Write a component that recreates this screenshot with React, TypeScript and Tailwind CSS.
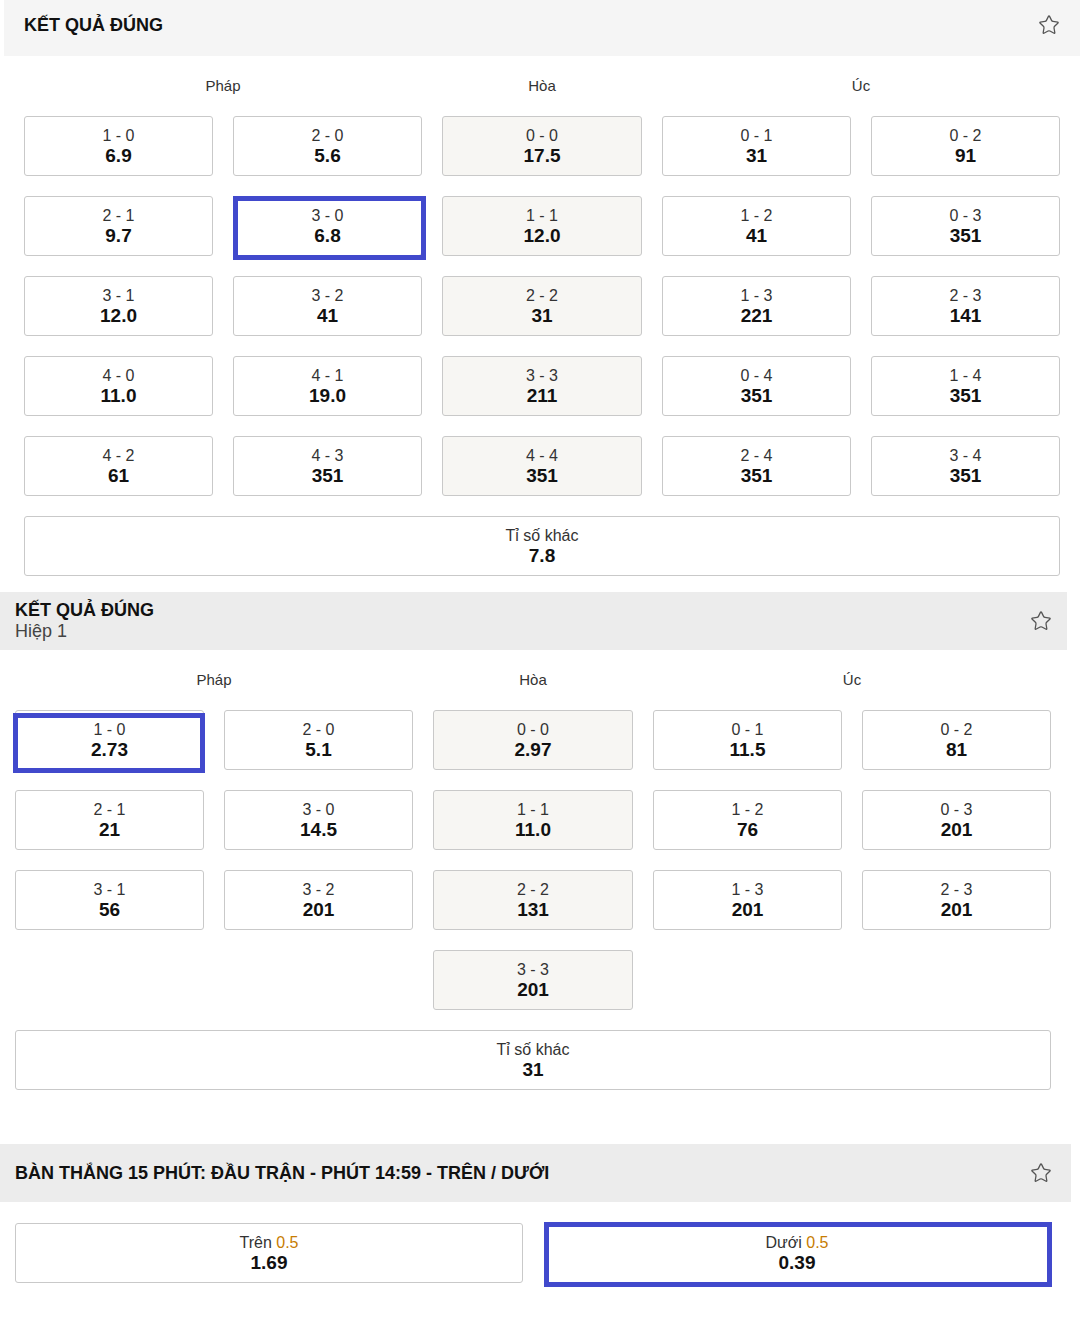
import React from "react";
import { Star } from "lucide-react";

type Cell = { s: string; o: string; mid?: boolean; sel?: "a" | "b"; start?: boolean };

const ft = { fontFamily: '"Liberation Sans", Arial, sans-serif' };

const full: Cell[][] = [
  [{ s: "1 - 0", o: "6.9" }, { s: "2 - 0", o: "5.6" }, { s: "0 - 0", o: "17.5", mid: true }, { s: "0 - 1", o: "31" }, { s: "0 - 2", o: "91" }],
  [{ s: "2 - 1", o: "9.7" }, { s: "3 - 0", o: "6.8", sel: "a" }, { s: "1 - 1", o: "12.0", mid: true }, { s: "1 - 2", o: "41" }, { s: "0 - 3", o: "351" }],
  [{ s: "3 - 1", o: "12.0" }, { s: "3 - 2", o: "41" }, { s: "2 - 2", o: "31", mid: true }, { s: "1 - 3", o: "221" }, { s: "2 - 3", o: "141" }],
  [{ s: "4 - 0", o: "11.0" }, { s: "4 - 1", o: "19.0" }, { s: "3 - 3", o: "211", mid: true }, { s: "0 - 4", o: "351" }, { s: "1 - 4", o: "351" }],
  [{ s: "4 - 2", o: "61" }, { s: "4 - 3", o: "351" }, { s: "4 - 4", o: "351", mid: true }, { s: "2 - 4", o: "351" }, { s: "3 - 4", o: "351" }],
];

const half: Cell[][] = [
  [{ s: "1 - 0", o: "2.73", sel: "b" }, { s: "2 - 0", o: "5.1" }, { s: "0 - 0", o: "2.97", mid: true }, { s: "0 - 1", o: "11.5" }, { s: "0 - 2", o: "81" }],
  [{ s: "2 - 1", o: "21" }, { s: "3 - 0", o: "14.5" }, { s: "1 - 1", o: "11.0", mid: true }, { s: "1 - 2", o: "76" }, { s: "0 - 3", o: "201" }],
  [{ s: "3 - 1", o: "56" }, { s: "3 - 2", o: "201" }, { s: "2 - 2", o: "131", mid: true }, { s: "1 - 3", o: "201" }, { s: "2 - 3", o: "201" }],
  [{ s: "3 - 3", o: "201", mid: true, start: true }],
];

function OddCell({ c, wide }: { c: Cell; wide?: boolean }) {
  return (
    <div
      className={`relative h-[60px] rounded-[3px] border border-[#c9c9c9] flex flex-col items-center justify-center ${c.mid ? "bg-[#f7f6f3]" : "bg-white"} ${c.start ? "col-start-3" : ""} ${wide ? "col-span-5" : ""}`}
    >
      <span className="text-[16px] leading-[20px] text-[#333]">{c.s}</span>
      <span className="text-[19px] leading-[20px] font-bold text-[#111]">{c.o}</span>
      {c.sel === "a" && <span className="absolute -top-px -left-px -right-[5px] -bottom-[5px] border-[5px] border-[#4149cc]" />}
      {c.sel === "b" && <span className="absolute top-[2px] -left-[3px] -right-[2px] -bottom-[4px] border-[5px] border-[#4149cc]" />}
    </div>
  );
}

function Header({ title, sub, pr }: { title: string; sub?: string; pr: string }) {
  return (
    <div className={`flex items-center justify-between h-[58px] bg-[#ececec] pl-[15px] ${pr}`}>
      <div className="flex flex-col">
        <span className="text-[18px] leading-[20px] font-bold text-[#111]">{title}</span>
        {sub && <span className="text-[18px] leading-[22px] text-[#444]">{sub}</span>}
      </div>
      <Star size={22} strokeWidth={1.4} className="text-[#555]" />
    </div>
  );
}

function Labels() {
  return (
    <div className="grid grid-cols-[398px_200px_398px] gap-x-5 h-[60px] items-center text-[15px] text-[#333] text-center">
      <span>Pháp</span>
      <span>Hòa</span>
      <span>Úc</span>
    </div>
  );
}

function Grid({ rows, other }: { rows: Cell[][]; other: string }) {
  return (
    <div className="grid grid-cols-[189px_189px_200px_189px_189px] gap-5">
      {rows.flat().map((c, i) => (
        <OddCell key={i} c={c} />
      ))}
      <OddCell c={{ s: "Tỉ số khác", o: other }} wide />
    </div>
  );
}

export default function App() {
  return (
    <div className="bg-white min-h-[1328px] w-[1091px]" style={ft}>
      {/* full match */}
      <div className="ml-[4px] w-[1076px]">
        <div className="flex items-center justify-between h-[56px] bg-[#f5f5f5] px-[20px] pb-[6px]">
          <span className="text-[18px] font-bold text-[#111]">KẾT QUẢ ĐÚNG</span>
          <Star size={22} strokeWidth={1.4} className="text-[#555]" />
        </div>
        <div className="px-[20px]">
          <Labels />
          <Grid rows={full} other="7.8" />
        </div>
      </div>

      {/* first half */}
      <div className="mt-[16px] w-[1067px]">
        <Header title="KẾT QUẢ ĐÚNG" sub="Hiệp 1" pr="pr-[15px]" />
        <div className="pl-[15px]">
          <Labels />
          <Grid rows={half} other="31" />
        </div>
      </div>

      {/* 15 min */}
      <div className="mt-[54px] w-[1071px]">
        <Header title="BÀN THẮNG 15 PHÚT: ĐẦU TRẬN - PHÚT 14:59 - TRÊN / DƯỚI" pr="pr-[19px]" />
        <div className="grid grid-cols-[508px_506px] gap-x-[21px] pl-[15px] mt-[21px]">
          {[
            { l: "Trên", o: "1.69", sel: false },
            { l: "Dưới", o: "0.39", sel: true },
          ].map((b) => (
            <div key={b.l} className="relative h-[60px] rounded-[3px] border border-[#c9c9c9] bg-white flex flex-col items-center justify-center">
              <span className="text-[16px] leading-[20px] text-[#333]">
                {b.l} <span className="text-[#c77c02]">0.5</span>
              </span>
              <span className="text-[19px] leading-[20px] font-bold text-[#111]">{b.o}</span>
              {b.sel && <span className="absolute -top-[2px] -left-px -right-[3px] -bottom-[5px] border-[5px] border-[#4149cc]" />}
            </div>
          ))}
        </div>
      </div>
    </div>
  );
}
